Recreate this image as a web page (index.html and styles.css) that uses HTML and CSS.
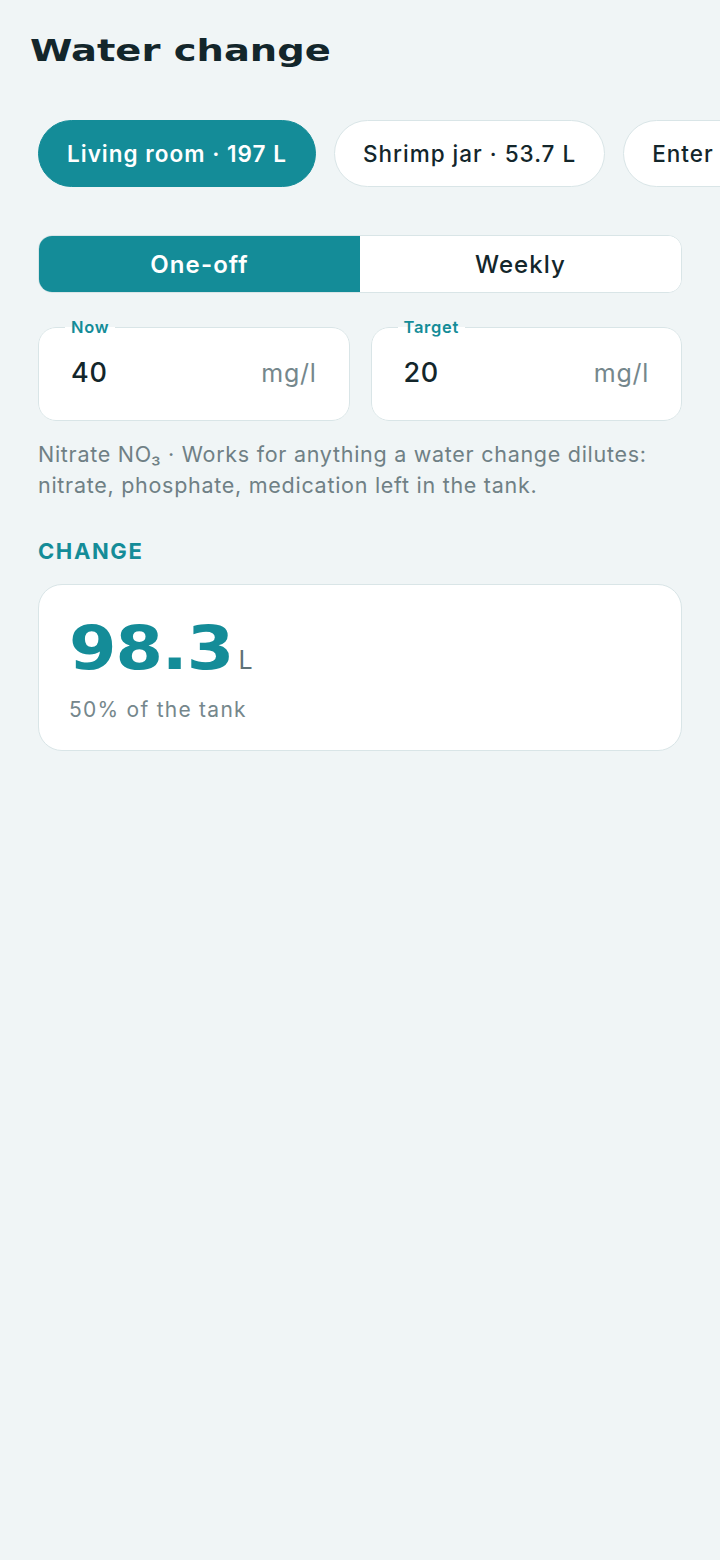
FILE: index.html
```html
<!DOCTYPE html>
<html lang="en">
<head>
    <meta charset="UTF-8">
    <meta name="viewport" content="width=device-width, initial-scale=1.0">
    <title>Water change</title>
    <link rel="stylesheet" href="styles.css">
</head>
<body>

<header class="top">
    <h1>Water change</h1>
</header>

<div class="tanks">
    <button class="chip active">Living room · 197 L</button>
    <button class="chip">Shrimp jar · 53.7 L</button>
    <button class="chip">Enter volume</button>
</div>

<main class="content">
    <div class="segment">
        <button class="seg active">One-off</button>
        <button class="seg">Weekly</button>
    </div>

    <div class="fields">
        <fieldset class="field">
            <legend>Now</legend>
            <span class="value">40</span>
            <span class="unit">mg/l</span>
        </fieldset>
        <fieldset class="field">
            <legend>Target</legend>
            <span class="value">20</span>
            <span class="unit">mg/l</span>
        </fieldset>
    </div>

    <p class="hint">Nitrate NO₃ · Works for anything a water change dilutes: nitrate, phosphate, medication left in the tank.</p>

    <h2 class="section">CHANGE</h2>

    <div class="result">
        <div class="amount"><span class="big">98.3</span><span class="litre">L</span></div>
        <p class="share">50% of the tank</p>
    </div>
</main>

</body>
</html>
```

FILE: styles.css
```css
body {
    margin: 0;
    padding: 0;
    background-color: #f0f5f6;
    color: #13262b;
    font-family: Inter, Roboto, sans-serif;
    letter-spacing: 0.045em;
}

.top {
    padding: 28px 30px 0;
}

.top h1 {
    display: inline-block;
    margin: 0;
    font-family: "DejaVu Sans", sans-serif;
    font-size: 31px;
    font-weight: 700;
    line-height: 44px;
    letter-spacing: 0;
    color: #13262b;
    transform: scaleX(1.24);
    transform-origin: left center;
}

.tanks {
    display: flex;
    gap: 18px;
    padding: 48px 0 0 38px;
    overflow: hidden;
    white-space: nowrap;
}

.chip {
    flex: none;
    height: 67px;
    padding: 0 28px;
    border: 1px solid #d9e5e7;
    border-radius: 34px;
    background: #fff;
    color: #13262b;
    font-family: Inter, sans-serif;
    font-size: 22.5px;
    font-weight: 500;
    letter-spacing: 0.045em;
}

.chip.active {
    background: #148c98;
    border-color: #148c98;
    color: #fff;
    font-weight: 600;
}

.content {
    padding: 0 38px;
}

.segment {
    display: flex;
    margin-top: 48px;
    height: 56px;
    border: 1px solid #d9e5e7;
    border-radius: 14px;
    overflow: hidden;
    background: #fff;
}

.seg {
    flex: 1;
    border: none;
    background: #fff;
    color: #13262b;
    font-family: Inter, sans-serif;
    font-size: 24px;
    font-weight: 500;
    letter-spacing: 0.045em;
}

.seg.active {
    background: #148c98;
    color: #fff;
    font-weight: 600;
}

.fields {
    display: flex;
    gap: 21px;
    margin-top: 24px;
}

.field {
    flex: 1;
    display: flex;
    align-items: center;
    justify-content: space-between;
    margin: 0;
    min-width: 0;
    height: 104px;
    padding: 0 32px 12px;
    border: 1px solid #d9e5e7;
    border-radius: 18px;
    background: #fff;
    box-sizing: border-box;
}

.field legend {
    margin-left: -6px;
    padding: 0 6px;
    font-size: 16.5px;
    font-weight: 600;
    color: #148c98;
}

.value {
    font-size: 27px;
    font-weight: 500;
    color: #13262b;
}

.unit {
    font-size: 25px;
    color: #75878c;
}

.hint {
    margin: 18px 0 0;
    font-size: 21.5px;
    line-height: 31px;
    color: #6f8085;
}

.section {
    margin: 38px 0 0;
    font-size: 22px;
    font-weight: 700;
    letter-spacing: 1.6px;
    line-height: 24px;
    color: #148c98;
}

.result {
    margin-top: 21px;
    padding: 32px 30px 28px;
    border: 1px solid #d9e5e7;
    border-radius: 24px;
    background: #fff;
}

.amount {
    display: flex;
    align-items: baseline;
}

/* wide display digits: stretch a bold face, then make room for the unit */
.big {
    display: inline-block;
    margin-right: 23px;
    font-family: "DejaVu Sans", sans-serif;
    font-size: 61px;
    font-weight: 700;
    letter-spacing: -1px;
    line-height: 1;
    color: #148c98;
    transform: scaleX(1.12);
    transform-origin: left center;
}

.litre {
    font-size: 25px;
    font-weight: 400;
    color: #5f7277;
}

.share {
    margin: 19px 0 0;
    font-size: 21px;
    letter-spacing: 0.06em;
    color: #75878c;
}
```
